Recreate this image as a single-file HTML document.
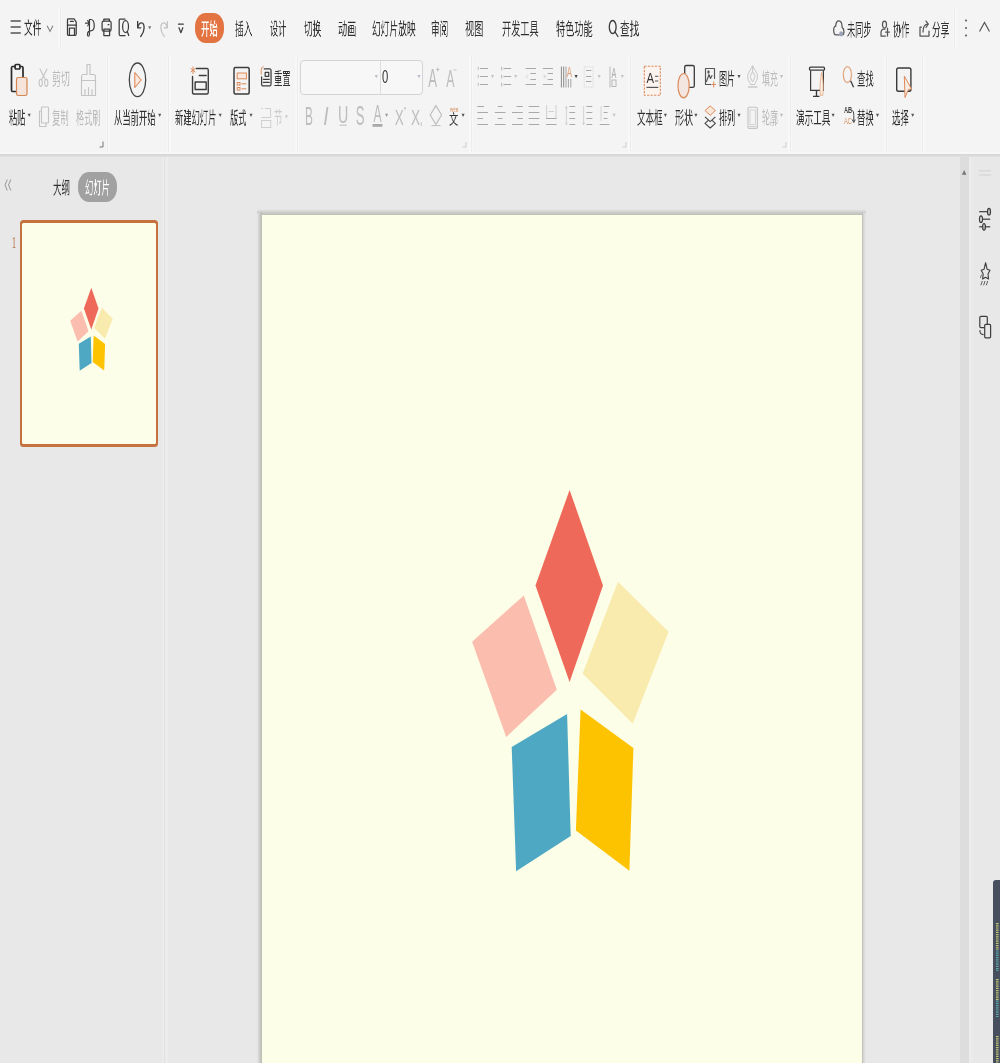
<!DOCTYPE html>
<html lang="zh-CN"><head><meta charset="utf-8"><title>WPS 演示</title>
<style>
html,body{margin:0;padding:0;}
body{width:1000px;height:1063px;overflow:hidden;background:#e8e8e8;position:relative;
font-family:"Liberation Sans","Noto Sans CJK SC",sans-serif;}
.b{position:absolute;}
.t{position:absolute;white-space:nowrap;line-height:1;will-change:transform;transform-origin:0 0;
font-family:"Liberation Sans","Noto Sans CJK SC",sans-serif;}
.l{position:absolute;white-space:nowrap;line-height:1;will-change:transform;transform-origin:0 0;}
#ov{position:absolute;left:0;top:0;will-change:transform;}
</style></head><body>
<div class="b" style="left:0px;top:0px;width:1000px;height:152px;background:#f4f4f4;"></div>
<div class="b" style="left:0px;top:152px;width:1000px;height:2px;background:#f8f8f8;"></div>
<div class="b" style="left:0px;top:154px;width:1000px;height:3.5px;background:transparent;background:linear-gradient(#d5d5d5,#dadada 40%,#e8e8e8);"></div>
<div class="b" style="left:0px;top:157px;width:1000px;height:906px;background:#e8e8e8;"></div>
<div class="b" style="left:161.5px;top:157px;width:6px;height:906px;background:#ececec;"></div>
<div class="b" style="left:164px;top:157px;width:1px;height:906px;background:#e1e1e1;"></div>
<div class="b" style="left:960px;top:157px;width:8.6px;height:906px;background:#dddddd;"></div>
<div class="b" style="left:968.6px;top:157px;width:6.4px;height:906px;background:transparent;background:linear-gradient(90deg,#ececec,#e8e8e8);"></div>
<div class="b" style="left:257px;top:209px;width:608.5px;height:5.5px;background:transparent;background:linear-gradient(#e9e9ea,#d2d2d0 45%,#bdbdb8);border-radius:3px 3px 0 0;"></div>
<div class="b" style="left:257px;top:212px;width:5px;height:860px;background:transparent;background:linear-gradient(90deg,#e9e9eb,#d0d0ce 45%,#b9bab3);border-radius:3px 0 0 0;"></div>
<div class="b" style="left:862px;top:212px;width:3.5px;height:860px;background:transparent;background:linear-gradient(90deg,#bcbbb6,#d6d6d4 40%,#e8e8e8);border-radius:0 3px 0 0;"></div>
<div class="b" style="left:262px;top:214.5px;width:600px;height:860px;background:#fcfee8;"></div>
<div class="b" style="left:20px;top:220px;width:138.3px;height:226.8px;background:#c6723f;border-radius:3.5px;"></div>
<div class="b" style="left:22.2px;top:222.7px;width:134px;height:221.4px;background:#fcfee9;border-radius:1.5px;"></div>
<div class="b" style="left:195px;top:13px;width:28.7px;height:30px;background:#e37441;border-radius:10.5px / 14px;"></div>
<div class="b" style="left:78.3px;top:171.7px;width:39px;height:30.2px;background:#a1a1a1;border-radius:11px / 14px;"></div>
<div class="b" style="left:300px;top:60px;width:123px;height:35px;background:#f7f7f7;border:1px solid #d4d4d4;border-radius:4px;box-sizing:border-box;"></div>
<div class="b" style="left:380px;top:61px;width:1px;height:33px;background:#dddddd;"></div>
<div class="b" style="left:105.5px;top:56px;width:4.4px;height:96px;background:#f8f8f8;"></div>
<div class="b" style="left:107.2px;top:56px;width:1px;height:96px;background:#ececec;"></div>
<div class="b" style="left:166.5px;top:56px;width:4.4px;height:96px;background:#f8f8f8;"></div>
<div class="b" style="left:168.2px;top:56px;width:1px;height:96px;background:#ececec;"></div>
<div class="b" style="left:295px;top:56px;width:4.4px;height:96px;background:#f8f8f8;"></div>
<div class="b" style="left:296.7px;top:56px;width:1px;height:96px;background:#ececec;"></div>
<div class="b" style="left:469px;top:56px;width:4.4px;height:96px;background:#f8f8f8;"></div>
<div class="b" style="left:470.7px;top:56px;width:1px;height:96px;background:#ececec;"></div>
<div class="b" style="left:628px;top:56px;width:4.4px;height:96px;background:#f8f8f8;"></div>
<div class="b" style="left:629.7px;top:56px;width:1px;height:96px;background:#ececec;"></div>
<div class="b" style="left:788px;top:56px;width:4.4px;height:96px;background:#f8f8f8;"></div>
<div class="b" style="left:789.7px;top:56px;width:1px;height:96px;background:#ececec;"></div>
<div class="b" style="left:884px;top:56px;width:4.4px;height:96px;background:#f8f8f8;"></div>
<div class="b" style="left:885.7px;top:56px;width:1px;height:96px;background:#ececec;"></div>
<div class="b" style="left:920.5px;top:56px;width:4.4px;height:96px;background:#f8f8f8;"></div>
<div class="b" style="left:922.2px;top:56px;width:1px;height:96px;background:#ececec;"></div>
<div class="b" style="left:58px;top:8px;width:4.4px;height:40px;background:#f8f8f8;"></div>
<div class="b" style="left:59.7px;top:8px;width:1px;height:40px;background:#ececec;"></div>
<div class="b" style="left:952.5px;top:8px;width:4.4px;height:40px;background:#f8f8f8;"></div>
<div class="b" style="left:954.2px;top:8px;width:1px;height:40px;background:#ececec;"></div>
<div class="b" style="left:992.5px;top:880px;width:8px;height:190px;background:#474e5e;border-radius:3px 0 0 0;"></div>
<svg id="ov" width="1000" height="1063" viewBox="0 0 1000 1063">
<polygon points="569.6,489.9 603.0,585.6 569.6,682.0 535.5,585.6" fill="#ee6959"/>
<polygon points="523.8,595.5 556.8,689.7 506.2,737.0 472.1,641.7" fill="#fbbdae"/>
<polygon points="618.0,581.7 668.6,631.8 632.7,723.8 582.6,673.4" fill="#f9ebae"/>
<polygon points="567.1,713.9 570.7,836.0 516.1,871.2 511.7,746.9" fill="#4fa8c3"/>
<polygon points="580.6,709.5 633.4,748.0 629.4,870.8 575.9,830.5" fill="#fdc200"/>
<polygon points="91.3,287.8 98.5,308.6 91.3,329.6 83.9,308.6" fill="#ee6959"/>
<polygon points="81.4,310.8 88.5,331.3 77.6,341.5 70.2,320.8" fill="#fbbdae"/>
<polygon points="101.8,307.8 112.7,318.7 105.0,338.7 94.1,327.7" fill="#f9ebae"/>
<polygon points="90.8,336.5 91.5,363.1 79.7,370.7 78.8,343.7" fill="#4fa8c3"/>
<polygon points="93.7,335.6 105.1,343.9 104.2,370.6 92.7,361.9" fill="#fdc200"/>
<g stroke="#3c3c3c" stroke-width="1.3"><line x1="10.6" y1="21" x2="20.8" y2="21"/><line x1="10.6" y1="27" x2="20.8" y2="27"/><line x1="10.6" y1="33" x2="20.8" y2="33"/></g>
<polyline points="47.1,25.7 50,31.4 52.9,25.7" fill="none" stroke="#808080" stroke-width="1.1"/>
<svg x="67" y="17.8" width="9.700000000000003" height="18.499999999999996" viewBox="0 0 20 19" preserveAspectRatio="none" overflow="visible"><g fill="none" stroke="#3c3c3c" stroke-width="1.25" stroke-linecap="round" stroke-linejoin="round"><path vector-effect="non-scaling-stroke" d="M1 2.5 C1 1.5 1.5 1 2.5 1 H14.5 L19 4.5 V16.5 C19 17.5 18.5 18 17.5 18 H2.5 C1.5 18 1 17.5 1 16.5 Z"/><path vector-effect="non-scaling-stroke" d="M7 3.7 H13"/><path vector-effect="non-scaling-stroke" d="M1 7.6 H19"/><path vector-effect="non-scaling-stroke" d="M5 18 V10.5 H15.5 V18"/></g></svg>
<svg x="85" y="18" width="10" height="19.299999999999997" viewBox="0 0 20 19.3" preserveAspectRatio="none" overflow="visible"><g fill="none" stroke="#3c3c3c" stroke-width="1.2" stroke-linecap="round" stroke-linejoin="round"><path vector-effect="non-scaling-stroke" d="M9 1.5 H11.5 C17 1.5 18.5 5 18.5 8 C18.5 12 15 12.8 11 12.8 C7.5 12.8 5 14 5 16.5 C5 18.8 8.3 18.8 8.9 16.5 V1.5"/><path vector-effect="non-scaling-stroke" d="M1 5.2 H8.5 M5.5 2.6 L8.7 5.2 L5.5 7.8"/></g></svg>
<svg x="101.6" y="18" width="10.0" height="18.5" viewBox="0 0 20 18.5" preserveAspectRatio="none" overflow="visible"><g fill="none" stroke="#3c3c3c" stroke-width="1.25" stroke-linecap="round" stroke-linejoin="round"><path vector-effect="non-scaling-stroke" d="M4.5 3 V1 H15.5 V3"/><rect vector-effect="non-scaling-stroke" x="1" y="3" width="18" height="10" rx="2"/><rect vector-effect="non-scaling-stroke" x="4.5" y="11" width="11.5" height="6.5"/><path vector-effect="non-scaling-stroke" d="M13 6.7 H14.5"/></g></svg>
<svg x="118.7" y="18" width="10.299999999999997" height="18.5" viewBox="0 0 21 18.5" preserveAspectRatio="none" overflow="visible"><g fill="none" stroke="#3c3c3c" stroke-width="1.25" stroke-linecap="round" stroke-linejoin="round"><path vector-effect="non-scaling-stroke" d="M13 17.5 H2.5 C1.5 17.5 1 17 1 16 V2.5 C1 1.5 1.5 1 2.5 1 H13"/><ellipse vector-effect="non-scaling-stroke" cx="14" cy="8.5" rx="6" ry="6"/><path vector-effect="non-scaling-stroke" d="M17.5 13.5 L20.5 17.5"/></g></svg>
<svg x="136.7" y="20" width="8.600000000000023" height="17.200000000000003" viewBox="0 0 18 17.2" preserveAspectRatio="none" overflow="visible"><g fill="none" stroke="#3c3c3c" stroke-width="1.3" stroke-linecap="round" stroke-linejoin="round"><path vector-effect="non-scaling-stroke" d="M2 7.5 C6 1 15.5 1.5 15.5 8 C15.5 12 11 15 8.5 16.5"/><path vector-effect="non-scaling-stroke" d="M2 1.5 V7.8 H8.5"/></g></svg>
<polygon points="148.15,26.2 151.25,26.2 149.70,29.5" fill="#777"/>
<svg x="159.7" y="20" width="8.600000000000023" height="17.200000000000003" viewBox="0 0 18 17.2" preserveAspectRatio="none" overflow="visible"><g fill="none" stroke="#c2c2c2" stroke-width="1.2" stroke-linecap="round" stroke-linejoin="round"><path vector-effect="non-scaling-stroke" d="M16 7.5 C12 1 2.5 1.5 2.5 8 C2.5 12 7 15 9.5 16.5"/><path vector-effect="non-scaling-stroke" d="M16 1.5 V7.8 H9.5"/></g></svg>
<svg x="178" y="23.2" width="5.800000000000011" height="10.2" viewBox="0 0 12 10.2" preserveAspectRatio="none" overflow="visible"><g fill="none" stroke="#3c3c3c" stroke-width="1.2" stroke-linecap="round" stroke-linejoin="round"><path vector-effect="non-scaling-stroke" d="M1 1 H11"/><path vector-effect="non-scaling-stroke" d="M2 4.5 L6 9.5 L10 4.5"/></g></svg>
<svg x="608.5" y="20" width="10.5" height="17" viewBox="0 0 20 17" preserveAspectRatio="none" overflow="visible"><g fill="none" stroke="#3c3c3c" stroke-width="1.3" stroke-linecap="round" stroke-linejoin="round"><ellipse vector-effect="non-scaling-stroke" cx="8" cy="7" rx="6.5" ry="6.5"/><path vector-effect="non-scaling-stroke" d="M12.5 12 L18 16.5"/></g></svg>
<svg x="833" y="19.8" width="11.600000000000023" height="16.599999999999998" viewBox="0 0 26 17" preserveAspectRatio="none" overflow="visible"><g fill="none" stroke="#555" stroke-width="1.25" stroke-linecap="round" stroke-linejoin="round"><path vector-effect="non-scaling-stroke" d="M14 15.5 H7 C3 15.5 1.5 13 1.5 10.5 C1.5 8 3.5 6.5 6 6.5 C6.5 3 9.5 1 13 1 C17.5 1 20.5 4 20.5 8 C23 8.5 24.5 10 24.5 12 C24.5 14 23 15.5 21 15.5"/></g></svg>
<ellipse cx="841.2" cy="33.8" rx="2.1" ry="2.6" fill="#9aa3b8"/>
<svg x="880" y="20" width="10.5" height="17" viewBox="0 0 21 17" preserveAspectRatio="none" overflow="visible"><g fill="none" stroke="#555" stroke-width="1.25" stroke-linecap="round" stroke-linejoin="round"><ellipse vector-effect="non-scaling-stroke" cx="9" cy="4.5" rx="4" ry="3.5"/><path vector-effect="non-scaling-stroke" d="M11 16 H2 V13 C2 10 5 9 8 9 H10"/><path vector-effect="non-scaling-stroke" d="M15 8 V16 M11 12 H19"/></g></svg>
<svg x="919" y="20" width="11.5" height="17" viewBox="0 0 23 17" preserveAspectRatio="none" overflow="visible"><g fill="none" stroke="#555" stroke-width="1.25" stroke-linecap="round" stroke-linejoin="round"><path vector-effect="non-scaling-stroke" d="M5 7 H2 V16 H20 V11"/><path vector-effect="non-scaling-stroke" d="M8 12 C8 7 12 4 18 4"/><path vector-effect="non-scaling-stroke" d="M14 1 L18.5 4 L14 7.5"/></g></svg>
<g fill="#666"><circle cx="966" cy="20.5" r="1.1"/><circle cx="966" cy="28" r="1.1"/><circle cx="966" cy="35.5" r="1.1"/></g>
<polyline points="979.5,31.5 984.5,22.5 989.5,31.5" fill="none" stroke="#555" stroke-width="1.2"/>
<svg x="11" y="63.5" width="13" height="29.0" viewBox="0 0 26 29" preserveAspectRatio="none" overflow="visible"><g fill="none" stroke="#2b2b2b" stroke-width="1.7" stroke-linecap="round" stroke-linejoin="round"><path vector-effect="non-scaling-stroke" d="M9 28 H3 C1.8 28 1 27 1 26 V5 C1 4 1.8 3 3 3 H8 M18 3 H22 C23.5 3 24 4 24 5 V14"/><rect vector-effect="non-scaling-stroke" x="8" y="1" width="10" height="4.5" rx="2"/></g></svg>
<rect x="16.5" y="77.5" width="10.5" height="18" rx="1.8" fill="#f6e3da" stroke="#d58753" stroke-width="1.2"/>
<polygon points="27.65,113.7 30.75,113.7 29.20,117.0" fill="#555"/>
<svg x="38.5" y="68" width="10.0" height="19" viewBox="0 0 20 19" preserveAspectRatio="none" overflow="visible"><g fill="none" stroke="#c4c4c4" stroke-width="1.1" stroke-linecap="round" stroke-linejoin="round"><path vector-effect="non-scaling-stroke" d="M3 1 L14 12 M17 1 L6 12"/><ellipse vector-effect="non-scaling-stroke" cx="4.5" cy="14.8" rx="3.2" ry="3.6"/><ellipse vector-effect="non-scaling-stroke" cx="15.5" cy="14.8" rx="3.2" ry="3.6"/></g></svg>
<svg x="80.5" y="63.5" width="16.0" height="33.0" viewBox="0 0 32 33" preserveAspectRatio="none" overflow="visible"><g fill="none" stroke="#c4c4c4" stroke-width="1.15" stroke-linecap="round" stroke-linejoin="round"><path vector-effect="non-scaling-stroke" d="M13 1 H19 V11 H27 C29 11 30 12 30 14 V32 H2 V14 C2 12 3 11 5 11 H13 Z"/><path vector-effect="non-scaling-stroke" d="M2 17 H30"/><path vector-effect="non-scaling-stroke" d="M9 32 V26 M16 32 V24 M23 32 V26"/></g></svg>
<svg x="39" y="106" width="10" height="21.5" viewBox="0 0 20 21.5" preserveAspectRatio="none" overflow="visible"><g fill="none" stroke="#c4c4c4" stroke-width="1.1" stroke-linecap="round" stroke-linejoin="round"><rect vector-effect="non-scaling-stroke" x="5" y="1" width="14" height="16" rx="1"/><path vector-effect="non-scaling-stroke" d="M5 5 H1 V20.5 H14 V17"/></g></svg>
<path d="M103 141.5 V147 H99.5" fill="none" stroke="#777" stroke-width="1"/>
<ellipse cx="137.5" cy="79.8" rx="8.2" ry="16.8" fill="none" stroke="#444" stroke-width="1.3"/>
<polygon points="134.8,72.5 141.2,80 134.8,87.5" fill="#fbe9df" stroke="#dd8a5a" stroke-width="1.1" stroke-linejoin="round"/>
<polygon points="158.15,113.7 161.25,113.7 159.70,117.0" fill="#555"/>
<svg x="192" y="67.5" width="16.80000000000001" height="27.5" viewBox="0 0 32 27.5" preserveAspectRatio="none" overflow="visible"><g fill="none" stroke="#3c3c3c" stroke-width="1.4" stroke-linecap="round" stroke-linejoin="round"><path vector-effect="non-scaling-stroke" d="M8 1 H29 C30.5 1 31 2 31 3 V24.5 C31 26 30 26.5 29 26.5 H3 C1.5 26.5 1 25.5 1 24.5 V9"/><rect vector-effect="non-scaling-stroke" x="6" y="14.5" width="21" height="7.5"/><path vector-effect="non-scaling-stroke" d="M14 8 H27"/></g></svg>
<g stroke="#dd8a5a" stroke-width="1"><line x1="193" y1="66.5" x2="193" y2="74"/><line x1="190.6" y1="68.4" x2="195.4" y2="72.1"/><line x1="195.4" y1="68.4" x2="190.6" y2="72.1"/></g>
<polygon points="218.65,113.7 221.75,113.7 220.20,117.0" fill="#555"/>
<svg x="233.5" y="66.5" width="16.19999999999999" height="28.5" viewBox="0 0 32 28.5" preserveAspectRatio="none" overflow="visible"><g fill="none" stroke="#3c3c3c" stroke-width="1.5" stroke-linecap="round" stroke-linejoin="round"><rect vector-effect="non-scaling-stroke" x="1" y="1" width="30" height="26.5" rx="2.5"/></g></svg>
<rect x="237.2" y="73" width="9.2" height="5.8" fill="#fbe9df" stroke="#dd8a5a" stroke-width="1"/>
<g stroke="#dd8a5a" stroke-width="1" fill="none"><rect x="237.2" y="82.5" width="2.8" height="2.6"/><line x1="241.5" y1="83.8" x2="246.4" y2="83.8"/><rect x="237.2" y="87.5" width="2.8" height="2.6"/><line x1="241.5" y1="88.8" x2="246.4" y2="88.8"/></g>
<polygon points="249.45,113.7 252.55,113.7 251.00,117.0" fill="#555"/>
<svg x="261.1" y="67.8" width="10.199999999999989" height="19.0" viewBox="0 0 20 19" preserveAspectRatio="none" overflow="visible"><g fill="none" stroke="#3c3c3c" stroke-width="1.25" stroke-linecap="round" stroke-linejoin="round"><path vector-effect="non-scaling-stroke" d="M6 1 H17.5 C18.8 1 19.5 1.7 19.5 3 V16 C19.5 17.3 18.8 18 17.5 18 H3 C1.7 18 1 17.3 1 16 V9"/><rect vector-effect="non-scaling-stroke" x="8" y="4.5" width="7" height="4"/><path vector-effect="non-scaling-stroke" d="M4.5 11.5 H16 M4.5 14.6 H16"/></g></svg>
<path d="M263.6 66.6 C261.8 66.8 261.2 68.5 261.2 71 V74.5" fill="none" stroke="#dd8a5a" stroke-width="1"/>
<g fill="none" stroke="#cfcfcf" stroke-width="1"><path d="M265 108.5 H270.6 V117.5 H261.2 M261.2 108.5 H262.8"/><rect x="261.6" y="120.5" width="9.2" height="7"/></g>
<polygon points="284.85,115.2 287.95,115.2 286.40,118.5" fill="#c8c8c8"/>
<text transform="translate(381.96,83.00) scale(0.6335,1)" font-family="'Liberation Sans',sans-serif" font-size="17.80" font-weight="400" fill="#333">0</text>
<polygon points="374.75,75.0 377.85,75.0 376.30,78.3" fill="#b8bcc8"/>
<polygon points="417.45,75.0 420.55,75.0 419.00,78.3" fill="#b8bcc8"/>
<text transform="translate(428.27,86.50) scale(0.5016,1)" font-family="'Liberation Sans',sans-serif" font-size="26.16" font-weight="400" fill="#bdbdbd">A</text>
<g stroke="#bdbdbd" stroke-width="0.9"><line x1="436" y1="69.5" x2="439.5" y2="69.5"/><line x1="437.7" y1="67.5" x2="437.7" y2="71.5"/></g>
<text transform="translate(446.28,86.50) scale(0.5318,1)" font-family="'Liberation Sans',sans-serif" font-size="23.26" font-weight="400" fill="#bdbdbd">A</text>
<line x1="453.5" y1="70" x2="456.5" y2="70" stroke="#bdbdbd" stroke-width="0.9"/>
<text transform="translate(304.93,124.60) scale(0.4621,1)" font-family="'Liberation Sans',sans-serif" font-size="25.58" font-weight="400" fill="#bdbdbd">B</text>
<text transform="translate(323.15,124.60) scale(0.7459,1)" font-family="'Liberation Sans',sans-serif" font-size="25.87" font-weight="400" fill="#bdbdbd" font-style="italic">I</text>
<text transform="translate(338.10,122.90) scale(0.5845,1)" font-family="'Liberation Sans',sans-serif" font-size="24.36" font-weight="400" fill="#bdbdbd">U</text>
<line x1="339.6" y1="125.2" x2="346.8" y2="125.2" stroke="#bdbdbd" stroke-width="1"/>
<text transform="translate(355.71,125.00) scale(0.4908,1)" font-family="'Liberation Sans',sans-serif" font-size="26.84" font-weight="400" fill="#bdbdbd">S</text>
<text transform="translate(373.38,122.30) scale(0.5157,1)" font-family="'Liberation Sans',sans-serif" font-size="23.69" font-weight="400" fill="#bdbdbd">A</text>
<rect x="372.5" y="124" width="9.9" height="2.8" fill="#a9a9a9"/>
<polygon points="385.05,113.7 388.15,113.7 386.60,117.0" fill="#999"/>
<text transform="translate(394.70,125.00) scale(0.6046,1)" font-family="'Liberation Sans',sans-serif" font-size="22.53" font-weight="400" fill="#bdbdbd">X</text>
<g stroke="#bdbdbd" stroke-width="0.8"><line x1="404" y1="108" x2="406" y2="108"/><line x1="405" y1="107" x2="405" y2="110"/></g>
<text transform="translate(410.90,125.00) scale(0.6046,1)" font-family="'Liberation Sans',sans-serif" font-size="22.53" font-weight="400" fill="#bdbdbd">X</text>
<line x1="421.3" y1="122" x2="421.3" y2="126" stroke="#bdbdbd" stroke-width="0.8"/>
<polygon points="435.9,105.6 441.6,115 435.9,124.4 430.2,115" fill="none" stroke="#bdbdbd" stroke-width="1.1"/><line x1="431.5" y1="125.6" x2="440.5" y2="125.6" stroke="#bdbdbd" stroke-width="1"/>
<polygon points="461.55,113.7 464.65,113.7 463.10,117.0" fill="#555"/>
<path d="M466 142 V147 H462.5" fill="none" stroke="#cdcdcd" stroke-width="1"/>
<line x1="480" y1="68.5" x2="488" y2="68.5" stroke="#a9a9a9" stroke-width="1"/>
<line x1="478.3" y1="66.9" x2="478.3" y2="70.1" stroke="#a9a9a9" stroke-width="0.7"/>
<line x1="480" y1="76.5" x2="488" y2="76.5" stroke="#a9a9a9" stroke-width="1"/>
<line x1="478.3" y1="74.9" x2="478.3" y2="78.1" stroke="#a9a9a9" stroke-width="0.7"/>
<line x1="480" y1="84.5" x2="488" y2="84.5" stroke="#a9a9a9" stroke-width="1"/>
<line x1="478.3" y1="82.9" x2="478.3" y2="86.1" stroke="#a9a9a9" stroke-width="0.7"/>
<polygon points="490.95,75.0 494.05,75.0 492.50,78.3" fill="#c4c4c4"/>
<line x1="503.4" y1="68.5" x2="511.2" y2="68.5" stroke="#a9a9a9" stroke-width="1"/>
<line x1="501.6" y1="66.5" x2="501.6" y2="70.5" stroke="#a9a9a9" stroke-width="0.7"/>
<line x1="503.4" y1="76.5" x2="511.2" y2="76.5" stroke="#a9a9a9" stroke-width="1"/>
<line x1="501.6" y1="74.5" x2="501.6" y2="78.5" stroke="#a9a9a9" stroke-width="0.7"/>
<line x1="503.4" y1="84.5" x2="511.2" y2="84.5" stroke="#a9a9a9" stroke-width="1"/>
<line x1="501.6" y1="82.5" x2="501.6" y2="86.5" stroke="#a9a9a9" stroke-width="0.7"/>
<polygon points="514.15,75.0 517.25,75.0 515.70,78.3" fill="#c4c4c4"/>
<line x1="525.6" y1="68.5" x2="536" y2="68.5" stroke="#a9a9a9" stroke-width="1"/>
<line x1="530.4" y1="73.5" x2="536" y2="73.5" stroke="#a9a9a9" stroke-width="1"/>
<line x1="530.4" y1="79.5" x2="536" y2="79.5" stroke="#a9a9a9" stroke-width="1"/>
<line x1="525.6" y1="84.5" x2="536" y2="84.5" stroke="#a9a9a9" stroke-width="1"/>
<polyline points="528,74.5 526.2,76.5 528,78.5" fill="none" stroke="#c6c6c6" stroke-width="0.7"/>
<line x1="542.8" y1="68.5" x2="553" y2="68.5" stroke="#a9a9a9" stroke-width="1"/>
<line x1="547.6" y1="73.5" x2="553" y2="73.5" stroke="#a9a9a9" stroke-width="1"/>
<line x1="547.6" y1="79.5" x2="553" y2="79.5" stroke="#a9a9a9" stroke-width="1"/>
<line x1="542.8" y1="84.5" x2="553" y2="84.5" stroke="#a9a9a9" stroke-width="1"/>
<polyline points="544,74.5 545.8,76.5 544,78.5" fill="none" stroke="#c6c6c6" stroke-width="0.7"/>
<line x1="542.8" y1="76.5" x2="545.5" y2="76.5" stroke="#c6c6c6" stroke-width="0.6"/>
<line x1="561.4" y1="66.5" x2="561.4" y2="87.5" stroke="#7d7d7d" stroke-width="0.9"/>
<line x1="563.7" y1="66.5" x2="563.7" y2="87.5" stroke="#7d7d7d" stroke-width="0.9"/>
<line x1="566" y1="66.5" x2="566" y2="87.5" stroke="#909090" stroke-width="0.8"/>
<line x1="568.4" y1="79" x2="568.4" y2="87.5" stroke="#909090" stroke-width="0.8"/>
<line x1="570.8" y1="79" x2="570.8" y2="87.5" stroke="#909090" stroke-width="0.8"/>
<text transform="translate(566.78,77.00) scale(0.5680,1)" font-family="'Liberation Sans',sans-serif" font-size="13.81" font-weight="400" fill="#dfa47d">A</text>
<polygon points="574.55,75.0 577.65,75.0 576.10,78.3" fill="#444"/>
<rect x="584.2" y="66.8" width="8.8" height="20.4" fill="none" stroke="#d6d6d6" stroke-width="0.8" stroke-dasharray="1.5 1"/>
<line x1="586" y1="70.5" x2="591.4" y2="70.5" stroke="#a9a9a9" stroke-width="1"/>
<line x1="586" y1="76.5" x2="591.4" y2="76.5" stroke="#a9a9a9" stroke-width="1"/>
<line x1="586" y1="81.5" x2="591.4" y2="81.5" stroke="#a9a9a9" stroke-width="1"/>
<polygon points="597.65,75.0 600.75,75.0 599.20,78.3" fill="#c4c4c4"/>
<line x1="610" y1="66.5" x2="610" y2="87.5" stroke="#a9a9a9" stroke-width="0.8"/>
<rect x="612" y="80" width="4" height="6.5" fill="none" stroke="#a9a9a9" stroke-width="0.8"/>
<text transform="translate(611.59,77.50) scale(0.5243,1)" font-family="'Liberation Sans',sans-serif" font-size="13.81" font-weight="400" fill="#a9a9a9">A</text>
<polygon points="620.75,75.0 623.85,75.0 622.30,78.3" fill="#c4c4c4"/>
<line x1="477.4" y1="106.5" x2="484" y2="106.5" stroke="#a9a9a9" stroke-width="1"/>
<line x1="477.4" y1="112.5" x2="488" y2="112.5" stroke="#a9a9a9" stroke-width="1"/>
<line x1="477.4" y1="118.5" x2="483" y2="118.5" stroke="#a9a9a9" stroke-width="1"/>
<line x1="477.4" y1="124.5" x2="488" y2="124.5" stroke="#a9a9a9" stroke-width="1"/>
<line x1="497.8" y1="106.5" x2="502.6" y2="106.5" stroke="#a9a9a9" stroke-width="1"/>
<line x1="494.8" y1="112.5" x2="505.5" y2="112.5" stroke="#a9a9a9" stroke-width="1"/>
<line x1="497.8" y1="118.5" x2="502.6" y2="118.5" stroke="#a9a9a9" stroke-width="1"/>
<line x1="494.8" y1="124.5" x2="505.5" y2="124.5" stroke="#a9a9a9" stroke-width="1"/>
<line x1="516.5" y1="106.5" x2="522.8" y2="106.5" stroke="#a9a9a9" stroke-width="1"/>
<line x1="512" y1="112.5" x2="522.8" y2="112.5" stroke="#a9a9a9" stroke-width="1"/>
<line x1="517.5" y1="118.5" x2="522.8" y2="118.5" stroke="#a9a9a9" stroke-width="1"/>
<line x1="512" y1="124.5" x2="522.8" y2="124.5" stroke="#a9a9a9" stroke-width="1"/>
<line x1="528.6" y1="106.5" x2="539.3" y2="106.5" stroke="#a9a9a9" stroke-width="1"/>
<line x1="528.6" y1="112.5" x2="539.3" y2="112.5" stroke="#a9a9a9" stroke-width="1"/>
<line x1="528.6" y1="118.5" x2="539.3" y2="118.5" stroke="#a9a9a9" stroke-width="1"/>
<line x1="528.6" y1="124.5" x2="539.3" y2="124.5" stroke="#a9a9a9" stroke-width="1"/>
<line x1="546" y1="118.5" x2="556.6" y2="118.5" stroke="#a9a9a9" stroke-width="1"/>
<line x1="546" y1="124.5" x2="556.6" y2="124.5" stroke="#a9a9a9" stroke-width="1"/>
<line x1="546.6" y1="105" x2="546.6" y2="118" stroke="#c6c6c6" stroke-width="0.8"/>
<line x1="556" y1="105" x2="556" y2="118" stroke="#c6c6c6" stroke-width="0.8"/>
<line x1="548.5" y1="111.5" x2="554" y2="111.5" stroke="#c6c6c6" stroke-width="0.8"/>
<line x1="569.4" y1="106.5" x2="575.2" y2="106.5" stroke="#a9a9a9" stroke-width="1"/>
<line x1="569.4" y1="112.5" x2="575.2" y2="112.5" stroke="#a9a9a9" stroke-width="1"/>
<line x1="569.4" y1="118.5" x2="575.2" y2="118.5" stroke="#a9a9a9" stroke-width="1"/>
<line x1="569.4" y1="124.5" x2="575.2" y2="124.5" stroke="#a9a9a9" stroke-width="1"/>
<line x1="566.4" y1="106" x2="566.4" y2="125" stroke="#c6c6c6" stroke-width="0.7"/>
<polyline points="565.2,108.5 566.4,106.3 567.6,108.5" fill="none" stroke="#c6c6c6" stroke-width="0.6"/><polyline points="565.2,122.5 566.4,124.7 567.6,122.5" fill="none" stroke="#c6c6c6" stroke-width="0.6"/>
<line x1="586.4" y1="106.5" x2="592.3" y2="106.5" stroke="#a9a9a9" stroke-width="1"/>
<line x1="586.4" y1="112.5" x2="592.3" y2="112.5" stroke="#a9a9a9" stroke-width="1"/>
<line x1="586.4" y1="118.5" x2="592.3" y2="118.5" stroke="#a9a9a9" stroke-width="1"/>
<line x1="586.4" y1="124.5" x2="592.3" y2="124.5" stroke="#a9a9a9" stroke-width="1"/>
<line x1="583.6" y1="106" x2="583.6" y2="125" stroke="#c6c6c6" stroke-width="0.7"/>
<polyline points="582.4,122.5 583.6,124.7 584.8,122.5" fill="none" stroke="#c6c6c6" stroke-width="0.6"/>
<line x1="603.6" y1="106.5" x2="609.4" y2="106.5" stroke="#a9a9a9" stroke-width="1"/>
<line x1="603.6" y1="112.5" x2="607.5" y2="112.5" stroke="#a9a9a9" stroke-width="1"/>
<line x1="603.6" y1="118.5" x2="607.5" y2="118.5" stroke="#a9a9a9" stroke-width="1"/>
<line x1="599.8" y1="124.5" x2="609.4" y2="124.5" stroke="#a9a9a9" stroke-width="1"/>
<line x1="601" y1="106" x2="601" y2="121" stroke="#c6c6c6" stroke-width="0.7"/>
<polygon points="612.55,113.7 615.65,113.7 614.10,117.0" fill="#c4c4c4"/>
<path d="M626 142 V147 H622.5" fill="none" stroke="#cdcdcd" stroke-width="1"/>
<rect x="644.3" y="66.3" width="16" height="29" fill="#fdf3ee" stroke="#dd8a5a" stroke-width="1.1" stroke-dasharray="2.2 1.3"/>
<text transform="translate(646.48,83.20) scale(0.7274,1)" font-family="'Liberation Sans',sans-serif" font-size="15.55" font-weight="400" fill="#333">A</text>
<line x1="655" y1="76.3" x2="658.3" y2="76.3" stroke="#555" stroke-width="1"/>
<line x1="655" y1="81" x2="658.3" y2="81" stroke="#555" stroke-width="1"/>
<line x1="646.5" y1="87.4" x2="658.3" y2="87.4" stroke="#555" stroke-width="1.2"/>
<polygon points="663.85,113.7 666.95,113.7 665.40,117.0" fill="#555"/>
<rect x="684.7" y="65.5" width="9.6" height="21.8" rx="1.6" fill="none" stroke="#3a3a3a" stroke-width="1.3"/>
<ellipse cx="683.6" cy="85.7" rx="5.6" ry="12.2" fill="#f3e6e1" stroke="#dd8a5a" stroke-width="1.2"/>
<polygon points="694.35,113.7 697.45,113.7 695.90,117.0" fill="#555"/>
<svg x="705" y="67.5" width="10" height="18.200000000000003" viewBox="0 0 20 18.2" preserveAspectRatio="none" overflow="visible"><g fill="none" stroke="#555" stroke-width="1.15" stroke-linecap="round" stroke-linejoin="round"><path vector-effect="non-scaling-stroke" d="M19 11 V1 H1 V17 H12"/><path vector-effect="non-scaling-stroke" d="M3 14 L8 7 L11 11 L14 8"/><circle vector-effect="non-scaling-stroke" cx="7" cy="4.5" r="1.2"/></g></svg>
<g stroke="#dd8a5a" stroke-width="1"><line x1="711.5" y1="84.5" x2="716" y2="84.5"/><line x1="713.7" y1="81.5" x2="713.7" y2="87.5"/></g>
<polygon points="737.45,75.0 740.55,75.0 739.00,78.3" fill="#555"/>
<g fill="none" stroke="#c6c6c6" stroke-width="1" stroke-linejoin="round"><path d="M752.6 65.6 C751.5 69 747.6 72.5 747.6 76.5 C747.6 80 750 82 750.6 84.6 H754.6 C755.2 82 757.6 80 757.6 76.5 C757.6 72.5 753.7 69 752.6 65.6 Z"/><path d="M752.6 71.5 L755.2 76.6 L752.6 82 L750 76.6 Z"/><path d="M752.6 66 V71.5"/><path d="M748 87 H757.4" stroke-width="1.4"/></g>
<polygon points="779.95,75.0 783.05,75.0 781.50,78.3" fill="#bbb"/>
<polygon points="710.2,118.6 715.4,123.3 710.2,128 705,123.3" fill="none" stroke="#444" stroke-width="1.1" stroke-linejoin="round"/>
<polygon points="705,116.9 710.2,112.2 715.4,116.9 710.2,121.6" fill="#f4f4f4"/><polyline points="705,116.9 710.2,121.6 715.4,116.9" fill="none" stroke="#444" stroke-width="1.1" stroke-linejoin="round"/>
<polygon points="710.2,105.9 715.4,110.6 710.2,115.3 705,110.6" fill="#fbe6da" stroke="#dd8a5a" stroke-width="1" stroke-linejoin="round"/>
<polygon points="737.45,113.7 740.55,113.7 739.00,117.0" fill="#555"/>
<rect x="748" y="107.2" width="9.4" height="21.2" rx="1.2" fill="none" stroke="#c4c4c4" stroke-width="1.1"/><rect x="750" y="110" width="5.4" height="14.6" fill="none" stroke="#d0d0d0" stroke-width="0.9"/><line x1="748.5" y1="126.4" x2="757" y2="126.4" stroke="#cfcfcf" stroke-width="1"/>
<polygon points="779.95,113.7 783.05,113.7 781.50,117.0" fill="#bbb"/>
<path d="M786 142 V147 H782.5" fill="none" stroke="#cdcdcd" stroke-width="1"/>
<rect x="809.5" y="67.2" width="15" height="3" rx="1" fill="none" stroke="#3a3a3a" stroke-width="1.3"/>
<path d="M810.6 70.5 V90.3 H823.4 V70.5" fill="none" stroke="#3a3a3a" stroke-width="1.2"/>
<path d="M816.5 90.5 V96 M813 96.4 H819.5" fill="none" stroke="#3a3a3a" stroke-width="1.4"/>
<path d="M820.3 95.4 C819.5 88 820.4 79 821.6 72.6 C823 78 823.8 88 822.7 95.4 Z" fill="#fbefe6" stroke="#e3a27a" stroke-width="0.8"/>
<polygon points="831.55,113.7 834.65,113.7 833.10,117.0" fill="#555"/>
<ellipse cx="847.4" cy="74.6" rx="4.1" ry="7.9" fill="none" stroke="#e3a883" stroke-width="1.3"/>
<line x1="850.6" y1="80.8" x2="853.6" y2="87.2" stroke="#444" stroke-width="1.4"/>
<path d="M850.5 110 C853.8 110 853.8 113 853.8 117 V121.5 M852.2 119.5 L853.8 122.5 L855.2 119.5" fill="none" stroke="#444" stroke-width="1"/>
<polygon points="875.95,113.7 879.05,113.7 877.50,117.0" fill="#555"/>
<rect x="896.7" y="68" width="14.2" height="23.3" rx="1.8" fill="none" stroke="#3a3a3a" stroke-width="1.4"/>
<path d="M904.3 76 L911.5 89 L908.3 89.6 L905 97.5 Z" fill="#f7ebe3" stroke="#dd8a5a" stroke-width="1" stroke-linejoin="round"/>
<polygon points="911.15,113.7 914.25,113.7 912.70,117.0" fill="#555"/>
<g fill="none" stroke="#8f8f8f" stroke-width="0.9"><polyline points="7.3,179.5 5,185 7.3,190.5"/><polyline points="10.8,179.5 8.5,185 10.8,190.5"/></g>
<text transform="translate(12.11,247.90) scale(0.4474,1)" font-family="'Liberation Serif',serif" font-size="17.73" font-weight="400" fill="#b06a3f">1</text>
<polygon points="961.9,174.7 966.4,174.7 964.15,170" fill="#777"/>
<line x1="978.8" y1="170.8" x2="990.8" y2="170.8" stroke="#d0d0d0" stroke-width="1"/>
<line x1="978.8" y1="175" x2="990.8" y2="175" stroke="#d0d0d0" stroke-width="1"/>
<g fill="none" stroke="#3c3c3c" stroke-width="1.2"><line x1="979.2" y1="211.7" x2="987.6" y2="211.7"/><ellipse cx="989" cy="211.7" rx="1.5" ry="3.3" fill="#c9c9c9"/><line x1="982.4" y1="219.2" x2="990.2" y2="219.2"/><ellipse cx="981" cy="219.2" rx="1.5" ry="3.3" fill="#e8e8e8"/><line x1="979.2" y1="226.8" x2="990.2" y2="226.8"/><ellipse cx="984" cy="226.8" rx="1.4" ry="3.3" fill="#c9c9c9"/></g>
<path d="M985.6 262.7 L987.1 269.2 L990 270.2 L988 274 L988.6 279 L985.6 277.3 L982.6 279 L983.2 274 L981.2 270.2 L984.1 269.2 Z" fill="none" stroke="#3c3c3c" stroke-width="1.1" stroke-linejoin="round"/>
<g stroke="#3c3c3c" stroke-width="0.8"><line x1="982.3" y1="281" x2="980.9" y2="285.3"/><line x1="985" y1="281" x2="983.6" y2="285.3"/><line x1="987.7" y1="281" x2="986.3" y2="285.3"/></g>
<line x1="981.6" y1="274.5" x2="980.4" y2="278" stroke="#3c3c3c" stroke-width="0.7"/>
<g fill="none" stroke="#3c3c3c" stroke-width="1.2" stroke-linejoin="round"><path d="M984.2 327.6 H981 C980.2 327.6 979.8 327.2 979.8 326.4 V317.6 C979.8 316.8 980.2 316.4 981 316.4 H986.1 C986.9 316.4 987.3 316.8 987.3 317.6 V324"/><rect x="984.7" y="324.4" width="5.9" height="13.4" rx="1"/><path d="M979.9 330.3 C979.9 333.8 980.8 334.6 983.6 334.6"/></g>
<g stroke-width="2.6" stroke-dasharray="1.2 1.0" fill="none"><line x1="997.3" y1="923" x2="997.3" y2="950" stroke="#c3c878"/><line x1="997.3" y1="950.4" x2="997.3" y2="971" stroke="#5aa9a8"/><line x1="997.3" y1="979" x2="997.3" y2="1000" stroke="#c3c878"/><line x1="997.3" y1="1000.6" x2="997.3" y2="1017" stroke="#5aa9a8"/><line x1="997.3" y1="1036" x2="997.3" y2="1063" stroke="#c3c878"/></g>
</svg>
<span class="t" style="left:23.79px;top:20.30px;font-size:17px;color:#303030;font-weight:400;transform:scaleX(0.5136);">文件</span>
<span class="t" style="left:200.91px;top:20.80px;font-size:17px;color:#ffffff;font-weight:500;transform:scaleX(0.4927);">开始</span>
<span class="t" style="left:234.70px;top:20.80px;font-size:17px;color:#303030;font-weight:400;transform:scaleX(0.5076);">插入</span>
<span class="t" style="left:269.72px;top:20.80px;font-size:17px;color:#303030;font-weight:400;transform:scaleX(0.4778);">设计</span>
<span class="t" style="left:303.70px;top:20.80px;font-size:17px;color:#303030;font-weight:400;transform:scaleX(0.5076);">切换</span>
<span class="t" style="left:337.68px;top:20.80px;font-size:17px;color:#303030;font-weight:400;transform:scaleX(0.5375);">动画</span>
<span class="t" style="left:371.69px;top:20.80px;font-size:17px;color:#303030;font-weight:400;transform:scaleX(0.5136);">幻灯片放映</span>
<span class="t" style="left:430.70px;top:20.80px;font-size:17px;color:#303030;font-weight:400;transform:scaleX(0.5076);">审阅</span>
<span class="t" style="left:464.68px;top:20.80px;font-size:17px;color:#303030;font-weight:400;transform:scaleX(0.5375);">视图</span>
<span class="t" style="left:501.68px;top:20.80px;font-size:17px;color:#303030;font-weight:400;transform:scaleX(0.5375);">开发工具</span>
<span class="t" style="left:555.68px;top:20.80px;font-size:17px;color:#303030;font-weight:400;transform:scaleX(0.5375);">特色功能</span>
<span class="t" style="left:619.66px;top:20.80px;font-size:17px;color:#303030;font-weight:400;transform:scaleX(0.5673);">查找</span>
<span class="t" style="left:846.72px;top:21.80px;font-size:17px;color:#303030;font-weight:400;transform:scaleX(0.4778);">未同步</span>
<span class="t" style="left:892.72px;top:21.80px;font-size:17px;color:#303030;font-weight:400;transform:scaleX(0.4778);">协作</span>
<span class="t" style="left:931.70px;top:21.80px;font-size:17px;color:#303030;font-weight:400;transform:scaleX(0.5076);">分享</span>
<span class="t" style="left:8.52px;top:109.80px;font-size:17px;color:#303030;font-weight:400;transform:scaleX(0.4748);">粘贴</span>
<span class="t" style="left:51.99px;top:70.80px;font-size:17px;color:#bababa;font-weight:400;transform:scaleX(0.5255);">剪切</span>
<span class="t" style="left:52.01px;top:109.80px;font-size:17px;color:#bababa;font-weight:400;transform:scaleX(0.4927);">复制</span>
<span class="t" style="left:75.72px;top:109.80px;font-size:17px;color:#bababa;font-weight:400;transform:scaleX(0.4778);">格式刷</span>
<span class="t" style="left:114.41px;top:109.80px;font-size:17px;color:#303030;font-weight:400;transform:scaleX(0.4885);">从当前开始</span>
<span class="t" style="left:175.31px;top:109.80px;font-size:17px;color:#303030;font-weight:400;transform:scaleX(0.4873);">新建幻灯片</span>
<span class="t" style="left:230.41px;top:109.80px;font-size:17px;color:#303030;font-weight:400;transform:scaleX(0.4807);">版式</span>
<span class="t" style="left:274.01px;top:70.60px;font-size:17px;color:#303030;font-weight:400;transform:scaleX(0.4867);">重置</span>
<span class="t" style="left:274.01px;top:110.30px;font-size:17px;color:#cbcbcb;font-weight:400;transform:scaleX(0.4957);">节</span>
<span class="t" style="left:636.70px;top:109.80px;font-size:17px;color:#303030;font-weight:400;transform:scaleX(0.5016);">文本框</span>
<span class="t" style="left:674.58px;top:109.80px;font-size:17px;color:#303030;font-weight:400;transform:scaleX(0.5315);">形状</span>
<span class="t" style="left:718.72px;top:70.80px;font-size:17px;color:#303030;font-weight:400;transform:scaleX(0.4718);">图片</span>
<span class="t" style="left:761.72px;top:70.80px;font-size:17px;color:#bababa;font-weight:400;transform:scaleX(0.4688);">填充</span>
<span class="t" style="left:718.72px;top:109.80px;font-size:17px;color:#303030;font-weight:400;transform:scaleX(0.4718);">排列</span>
<span class="t" style="left:761.72px;top:109.80px;font-size:17px;color:#bababa;font-weight:400;transform:scaleX(0.4688);">轮廓</span>
<span class="t" style="left:796.20px;top:109.80px;font-size:17px;color:#303030;font-weight:400;transform:scaleX(0.5061);">演示工具</span>
<span class="t" style="left:856.51px;top:70.80px;font-size:17px;color:#303030;font-weight:400;transform:scaleX(0.4927);">查找</span>
<span class="t" style="left:856.51px;top:109.80px;font-size:17px;color:#303030;font-weight:400;transform:scaleX(0.4927);">替换</span>
<span class="t" style="left:892.01px;top:109.80px;font-size:17px;color:#303030;font-weight:400;transform:scaleX(0.4927);">选择</span>
<span class="t" style="left:52.70px;top:179.80px;font-size:17px;color:#303030;font-weight:400;transform:scaleX(0.4987);">大纲</span>
<span class="t" style="left:85.21px;top:179.80px;font-size:17px;color:#ffffff;font-weight:400;transform:scaleX(0.4877);">幻灯片</span>
<span class="t" style="left:448.88px;top:113.40px;font-size:13.5px;color:#333;font-weight:400;transform:scaleX(0.6768);">文</span>
<span class="t" style="left:449.6px;top:106.2px;font-size:7.5px;color:#d98a58;transform:scaleX(0.6);font-family:'Liberation Sans',sans-serif;">wén</span>
<span class="t" style="left:843.5px;top:105.5px;font-size:9px;color:#444;transform:scaleX(0.62);font-family:'Liberation Sans',sans-serif;font-weight:700;">AB</span>
<span class="t" style="left:843.5px;top:116.5px;font-size:9px;color:#d98a58;transform:scaleX(0.62);font-family:'Liberation Sans',sans-serif;">AC</span>
</body></html>
